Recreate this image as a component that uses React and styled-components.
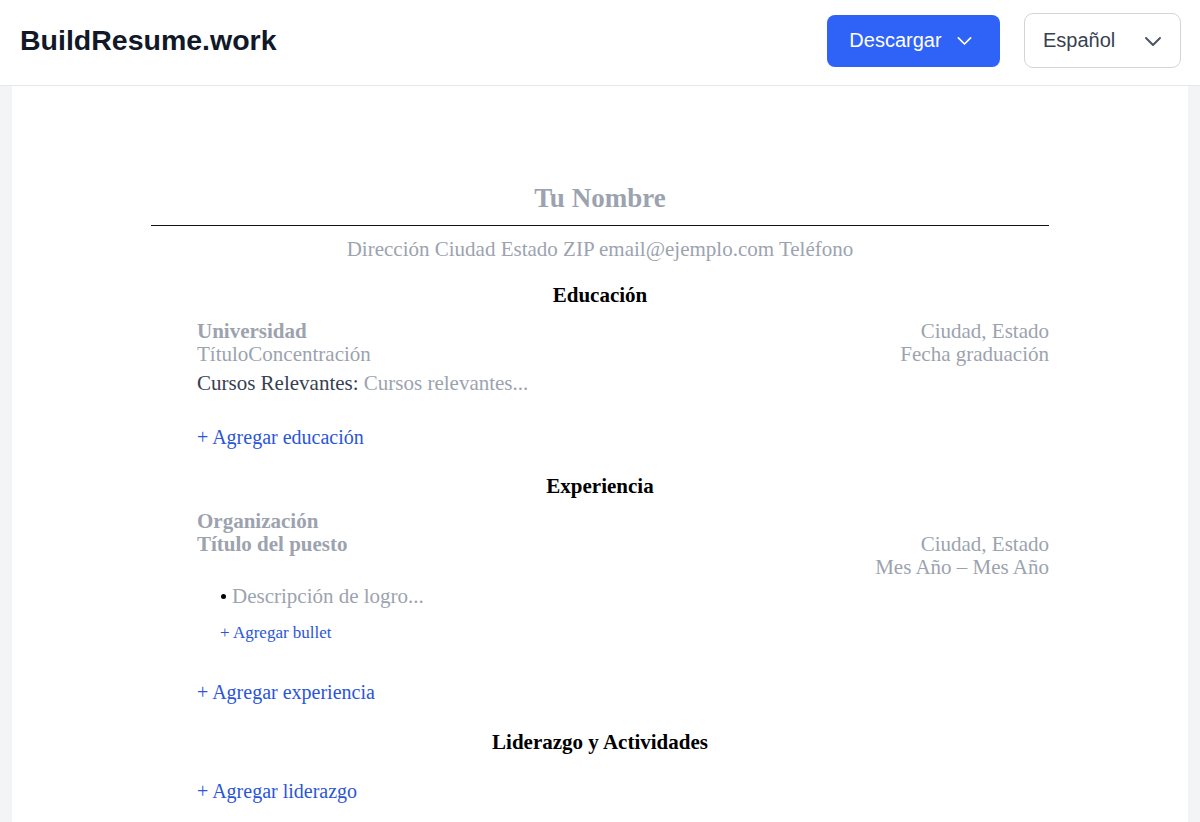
import React from "react";
import styled, { createGlobalStyle } from "styled-components";

const GlobalStyle = createGlobalStyle`
  html, body {
    margin: 0;
    padding: 0;
    background: #f3f4f6;
  }
  * {
    box-sizing: border-box;
  }
`;

const Page = styled.div`
  min-height: 822px;
  display: flex;
  flex-direction: column;
`;
const Header = styled.header`
  height: 86px;
  background: #fff;
  border-bottom: 1px solid #e5e7eb;
  display: flex;
  align-items: center;
  justify-content: space-between;
  padding: 0 19px 4px 20px;
`;
const Brand = styled.div`
  font-family: "Liberation Sans", Arial, sans-serif;
  font-size: 28.5px;
  font-weight: bold;
  color: #111827;
`;
const Actions = styled.div`
  display: flex;
  align-items: center;
  gap: 24px;
`;
const DownloadButton = styled.button`
  height: 52px;
  width: 173px;
  background: #2f62f6;
  color: #fff;
  border: none;
  border-radius: 8px;
  font-family: "Liberation Sans", Arial, sans-serif;
  font-size: 20px;
  display: flex;
  align-items: center;
  justify-content: center;
  gap: 12px;
  padding: 0 3px 0 0;
`;
const LangSelect = styled.div`
  height: 55px;
  width: 157px;
  border: 1px solid #d1d5db;
  border-radius: 9px;
  background: #fff;
  display: flex;
  align-items: center;
  justify-content: space-between;
  padding: 0 15px 0 18px;
  font-family: "Liberation Sans", Arial, sans-serif;
  font-size: 20px;
  color: #374151;
`;
const Main = styled.main`
  flex: 1;
  padding: 0 12px;
  display: flex;
`;
const Paper = styled.div`
  flex: 1;
  background: #fff;
  padding: 97px 139px 20px 139px;
  font-family: "Liberation Serif", "Times New Roman", serif;
  font-size: 21px;
  line-height: 23px;
  color: #9ca3af;
`;
const Name = styled.h1`
  margin: 0;
  text-align: center;
  font-size: 27px;
  line-height: 31px;
  font-weight: bold;
  color: #9ca3af;
`;
const Rule = styled.hr`
  margin: 11px 0 0;
  border: none;
  border-top: 1.5px solid #111;
`;
const Contact = styled.div`
  text-align: center;
  margin-top: 12px;
`;
const SectionTitle = styled.h2`
  margin: ${(p) => p.$top}px 0 0;
  text-align: center;
  font-size: 21px;
  line-height: 23px;
  font-weight: bold;
  color: #000;
`;
const Block = styled.div`
  padding-left: 46px;
  margin-top: ${(p) => p.$top || 0}px;
`;
const Row = styled.div`
  display: flex;
  justify-content: space-between;
  align-items: flex-start;
`;
const Strong = styled.span`
  font-weight: bold;
`;
const Right = styled.div`
  text-align: right;
`;
const Courses = styled.div`
  margin-top: 6px;
`;
const Label = styled.span`
  color: #374151;
`;
const AddLink = styled.div`
  margin-top: ${(p) => p.$top}px;
  color: #2b55d9;
  font-size: ${(p) => (p.$small ? "17px" : "20px")};
  line-height: ${(p) => (p.$small ? "20px" : "23px")};
  padding-left: ${(p) => (p.$small ? "23px" : "0")};
`;
const BulletList = styled.ul`
  margin: 6px 0 0;
  padding-left: 23px;
  list-style: none;
`;
const Bullet = styled.li`
  display: flex;
  align-items: center;
  gap: 6px;
  &::before {
    content: "";
    width: 5px;
    height: 5px;
    border-radius: 50%;
    background: #000;
    margin-left: 1px;
  }
`;

const Chevron = ({ size, color, width }) => (
  <svg
    width={size}
    height={size}
    viewBox="0 0 24 24"
    fill="none"
    stroke={color}
    strokeWidth={width}
    strokeLinecap="round"
    strokeLinejoin="round"
  >
    <path d="M5 9l7 7 7-7" />
  </svg>
);

const App = () => {
  return (
    <Page>
      <GlobalStyle />
      <Header>
        <Brand>BuildResume.work</Brand>
        <Actions>
          <DownloadButton>
            Descargar
            <Chevron size={21} color="#fff" width={2} />
          </DownloadButton>
          <LangSelect>
            Español
            <Chevron size={24} color="#4b5563" width={2} />
          </LangSelect>
        </Actions>
      </Header>
      <Main>
        <Paper>
          <Name>Tu Nombre</Name>
          <Rule />
          <Contact>Dirección Ciudad Estado ZIP email@ejemplo.com Teléfono</Contact>

          <SectionTitle $top={23}>Educación</SectionTitle>
          <Block $top={13}>
            <Row>
              <div>
                <Strong>Universidad</Strong>
                <div>TítuloConcentración</div>
              </div>
              <Right>
                <div>Ciudad, Estado</div>
                <div>Fecha graduación</div>
              </Right>
            </Row>
            <Courses>
              <Label>Cursos Relevantes:</Label> Cursos relevantes...
            </Courses>
            <AddLink $top={31}>+ Agregar educación</AddLink>
          </Block>

          <SectionTitle $top={26}>Experiencia</SectionTitle>
          <Block $top={12}>
            <Strong>Organización</Strong>
            <Row>
              <Strong>Título del puesto</Strong>
              <Right>
                <div>Ciudad, Estado</div>
                <div>Mes Año – Mes Año</div>
              </Right>
            </Row>
            <BulletList>
              <Bullet>Descripción de logro...</Bullet>
            </BulletList>
            <AddLink $top={15} $small>
              + Agregar bullet
            </AddLink>
            <AddLink $top={38}>+ Agregar experiencia</AddLink>
          </Block>

          <SectionTitle $top={27}>Liderazgo y Actividades</SectionTitle>
          <Block>
            <AddLink $top={26}>+ Agregar liderazgo</AddLink>
          </Block>
        </Paper>
      </Main>
    </Page>
  );
};

export default App;
